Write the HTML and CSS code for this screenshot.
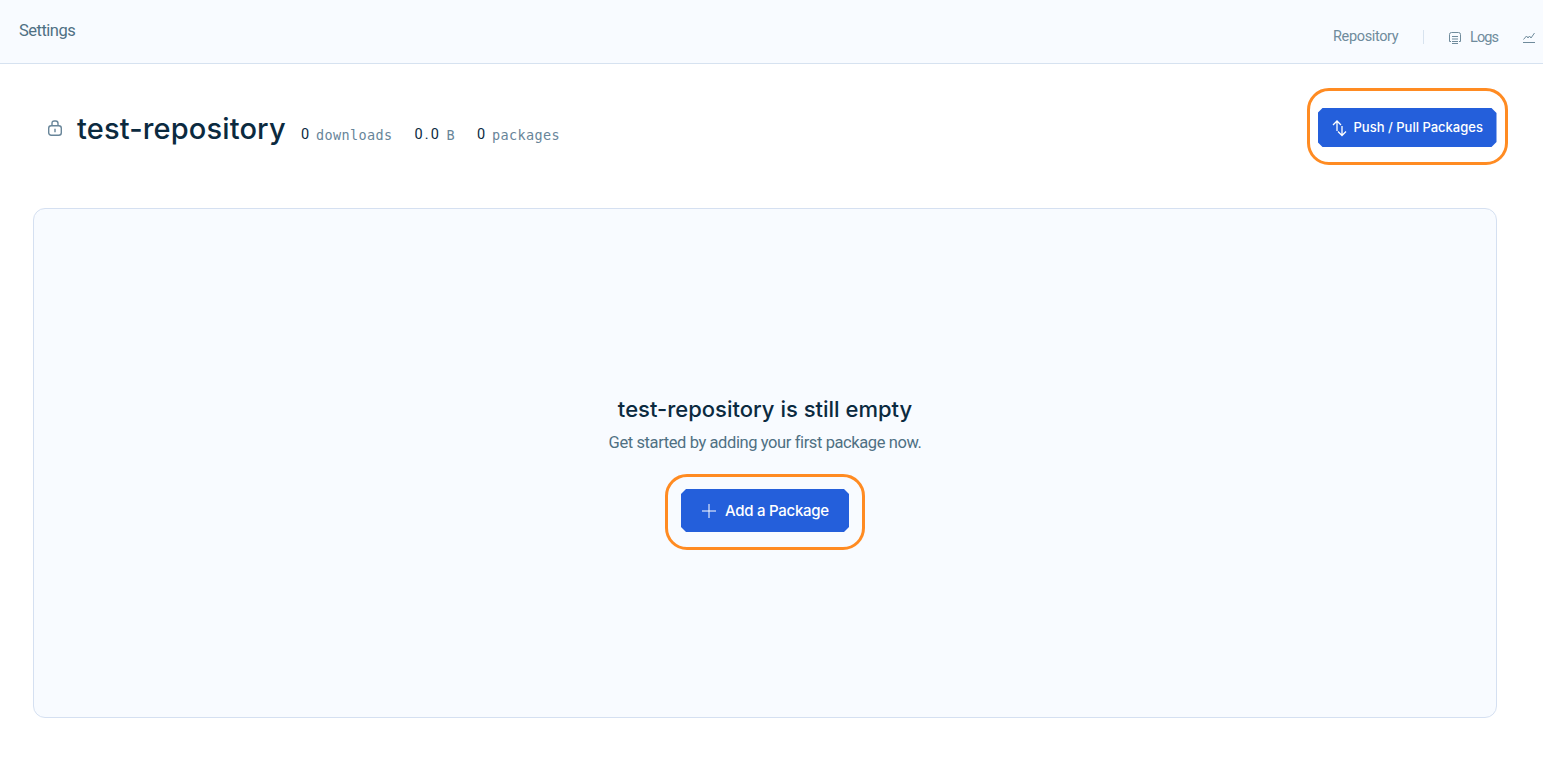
FILE: index.html
```html
<!DOCTYPE html>
<html lang="en">
<head>
<meta charset="utf-8">
<title>test-repository</title>
<link rel="stylesheet" href="styles.css">
</head>
<body>
<header class="topbar">
  <a class="settings">Settings</a>
  <nav class="tabs">
    <a class="tab repository">Repository</a>
    <span class="divider"></span>
    <a class="tab logs"><svg width="14" height="14" viewBox="0 0 14 14"><path d="M3 10.500H1.500V3.500Q1.500 1.500 3.500 1.500H10.500Q12.500 1.500 12.500 3.500V10.500H11M4 5.500H10M4 8H10M4 10.500H10M4 12.500H10"/></svg><span>Logs</span></a>
    <a class="tab metrics"><svg width="14" height="14" viewBox="0 0 14 14"><path d="M1 12.500H13M1.500 9.500L4.500 6L6 8L7.500 6L9 8L12.500 3"/></svg></a>
  </nav>
</header>
<main>
  <section class="repo-head">
    <svg class="lock" width="16" height="18" viewBox="0 0 16 18"><rect x="1.700" y="6.700" width="12.600" height="9.600" rx="2.500"/><path d="M5 6.500V4.500Q5 2 7.300 2H8.700Q11 2 11 4.500V6.500M8 9.800V13.200"/></svg>
    <h1>test-repository</h1>
    <ul class="stats">
      <li><b>0</b><span>downloads</span></li>
      <li><b class="size">0.0</b><span>B</span></li>
      <li><b>0</b><span>packages</span></li>
    </ul>
    <div class="callout callout-push">
      <button class="btn push"><svg width="16" height="18" viewBox="0 0 16 18"><path d="M5 12V2M1 6L5 2L9 6M10 7V16.500M6 12.500L10 16.500L14 12.500"/></svg><span>Push / Pull Packages</span></button>
    </div>
  </section>
  <section class="empty">
    <h2>test-repository is still empty</h2>
    <p>Get started by adding your first package now.</p>
    <div class="callout callout-add">
      <button class="btn add"><svg width="14" height="14" viewBox="0 0 14 14"><path d="M7 0V14M0 7H14"/></svg><span>Add a Package</span></button>
    </div>
  </section>
</main>
</body>
</html>
```

FILE: styles.css
```css
* { box-sizing: border-box; }
body { margin: 0; background: #fff; font-family: Roboto, sans-serif; color: #0b2a3f; overflow: hidden; }
svg { flex: none; fill: none; stroke: currentColor; }
.topbar { height: 64px; padding: 0 7px 0 19px; display: flex; justify-content: space-between; background: #f8fbff; border-bottom: 1px solid #d6e2f0; }
.settings { padding-top: 21px; font-size: 16.5px; line-height: 20px; letter-spacing: -.5px; color: #4f7083; }
.tabs { display: flex; padding-top: 28px; color: #6f8b9c; font-size: 14.5px; line-height: 18px; letter-spacing: -.35px; }
.repository { width: 67px; margin-right: -1px; padding-left: 1px; white-space: nowrap; }
.logs span { padding-top: 1px; letter-spacing: -.9px; }
.divider { width: 1px; height: 14px; margin: 2px 24px 0 25px; background: #d8e3ef; }
.logs { display: flex; gap: 8px; width: 50px; margin-right: 24px; }
.logs svg { display: block; margin-top: 3px; }
.metrics svg { display: block; margin-top: 2px; }
.repo-head { display: flex; height: 144px; padding: 24px 35px 0 47px; }
.lock { margin-top: 31px; color: #688599; stroke-width: 1.4; }
h1 { width: 208px; margin: 20px 16px 0 14px; font: 500 29px/42px Inter, sans-serif; letter-spacing: .15px; white-space: nowrap; }
.stats { display: flex; gap: 22px; margin: 37px auto 0 0; padding: 0; list-style: none; }
.stats li { display: flex; gap: 5px; line-height: 20px; }
.stats b { width: 10px; font-weight: 400; font-size: 14.5px; }
.stats .size { width: 27px; letter-spacing: 2.2px; }
.stats span { font-family: "DejaVu Sans Mono", monospace; font-size: 13.5px; letter-spacing: .37px; color: #688599; }
.callout { display: flex; justify-content: center; border: 3px solid #ff8b22; border-radius: 22px; }
.callout-push { width: 201px; height: 77px; padding: 17px 1px 0 0; }
.callout-add { width: 200px; height: 76px; padding-top: 12px; }
.btn { display: flex; align-items: center; border: 0; background: #245fdb; color: #fff; font-family: Inter, sans-serif; font-weight: 500; white-space: nowrap; clip-path: polygon(5px 0, calc(100% - 5px) 0, 100% 5px, 100% calc(100% - 5px), calc(100% - 5px) 100%, 5px 100%, 0 calc(100% - 5px), 0 5px); }
.push { width: 179px; height: 39px; padding: 0 0 0 14px; gap: 6px; font-size: 13px; }
.push span { padding-bottom: 1px; }
.push svg { stroke-width: 1.3; }
.add { width: 168px; height: 43px; padding: 0 0 0 21px; gap: 9px; font-size: 15px; letter-spacing: -.27px; }
.empty { display: flex; flex-direction: column; align-items: center; width: 1464px; height: 510px; margin-left: 33px; padding-top: 184px; background: #f8fbff; border: 1px solid #d5e0f1; border-radius: 12px; }
h2 { margin: 0; font: 500 22px/32px Inter, sans-serif; }
.empty p { margin: 8px 0 21px; font-size: 16.5px; line-height: 20px; letter-spacing: -.4px; color: #4f7083; }
```
